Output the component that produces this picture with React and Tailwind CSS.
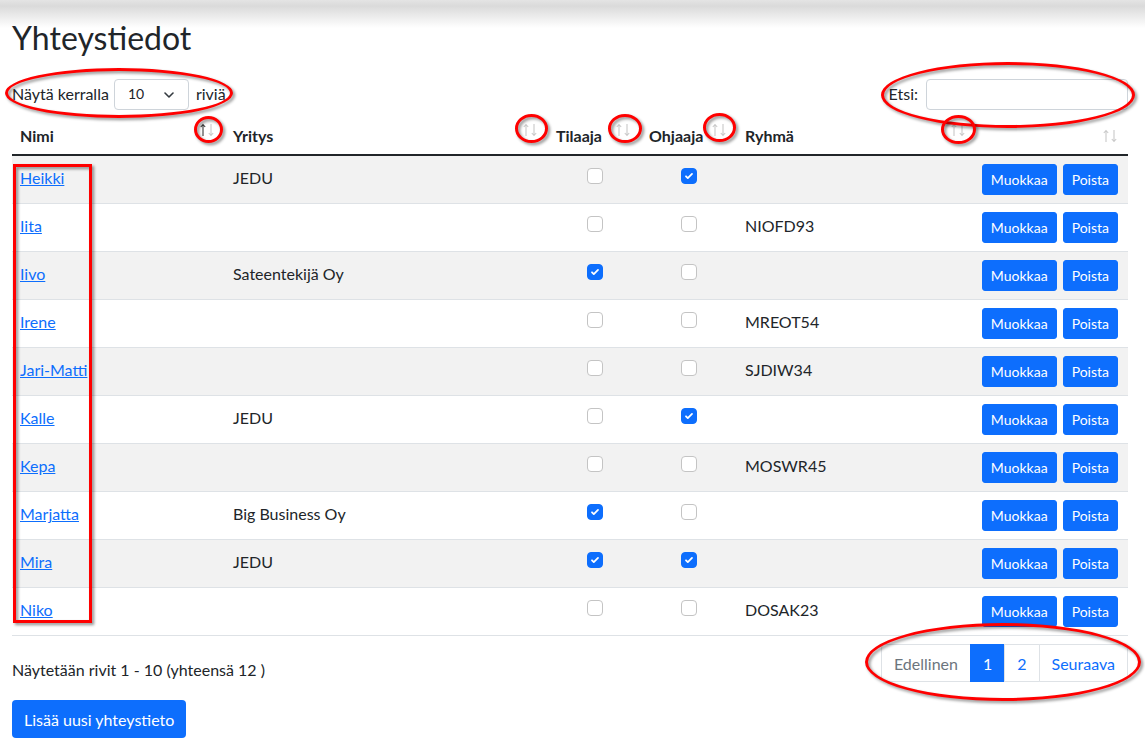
import { useState } from 'react'

const ROWS = [
  { name: 'Heikki', company: 'JEDU', tilaaja: false, ohjaaja: true, group: '' },
  { name: 'Iita', company: '', tilaaja: false, ohjaaja: false, group: 'NIOFD93' },
  { name: 'Iivo', company: 'Sateentekijä Oy', tilaaja: true, ohjaaja: false, group: '' },
  { name: 'Irene', company: '', tilaaja: false, ohjaaja: false, group: 'MREOT54' },
  { name: 'Jari-Matti', company: '', tilaaja: false, ohjaaja: false, group: 'SJDIW34' },
  { name: 'Kalle', company: 'JEDU', tilaaja: false, ohjaaja: true, group: '' },
  { name: 'Kepa', company: '', tilaaja: false, ohjaaja: false, group: 'MOSWR45' },
  { name: 'Marjatta', company: 'Big Business Oy', tilaaja: true, ohjaaja: false, group: '' },
  { name: 'Mira', company: 'JEDU', tilaaja: true, ohjaaja: true, group: '' },
  { name: 'Niko', company: '', tilaaja: false, ohjaaja: false, group: 'DOSAK23' },
]

function SortIcon({ active }) {
  return (
    <svg width="16" height="14" viewBox="0 0 16 14" className="shrink-0 mt-[-1px]" fill="none" strokeWidth="1.1">
      <g stroke={active ? '#3a3a3a' : '#c9c9c9'}>
        <path d="M4 13V1.5M1.8 4L4 1.5 6.2 4" />
      </g>
      <g stroke="#c9c9c9">
        <path d="M12 1v11.5M9.8 10L12 12.5 14.2 10" />
      </g>
    </svg>
  )
}

function Checkbox({ checked }) {
  return checked ? (
    <span className="inline-flex w-4 h-4 mt-[4px] rounded-[4px] bg-[#0d6efd] border border-[#0d6efd] items-center justify-center">
      <svg width="12" height="12" viewBox="0 0 20 20" fill="none">
        <path d="M5 10.5l3 3 7-7" stroke="#fff" strokeWidth="3" strokeLinecap="round" strokeLinejoin="round" />
      </svg>
    </span>
  ) : (
    <span className="inline-block w-4 h-4 mt-[4px] rounded-[4px] bg-white border border-[#c4c4c4]" />
  )
}

function Th({ children, active }) {
  return (
    <th className="px-2 pt-[10px] pb-[6px] text-left font-bold border-b-2 border-[#212529]">
      <div className="flex items-start justify-between pr-[2px]">
        <span className="leading-6">{children}</span>
        <SortIcon active={active} />
      </div>
    </th>
  )
}

const ring = 'absolute border-[3px] border-[#ff0000] rounded-[50%] drop-shadow-[2px_2px_1.5px_rgba(0,0,0,0.45)] pointer-events-none'
const cell = 'px-2 pt-[10px] pb-[6px] align-top leading-6'

export default function App() {
  const [perPage, setPerPage] = useState('10')
  const [query, setQuery] = useState('')

  return (
    <div
      className="relative min-h-screen bg-white bg-no-repeat bg-[linear-gradient(to_bottom,#e4e4e4_0px,#dadada_6px,#ffffff_28px)] text-[#212529] pl-3 pr-[17px] pt-[19px] pb-4"
      style={{ fontFamily: 'Lato, "Noto Sans", sans-serif' }}
    >
      <h2 className="text-[32px] leading-[38px] font-normal">Yhteystiedot</h2>

      {/* Length + search */}
      <div className="flex items-center justify-between mt-[21px] h-[31px]">
        <label className="flex items-center text-base pt-[1px]">
          Näytä kerralla
          <span className="relative ml-[5px] mr-[7px]">
            <select
              value={perPage}
              onChange={(e) => setPerPage(e.target.value)}
              className="appearance-none w-[75px] h-[31px] pl-[13px] pr-6 text-sm border border-[#ced4da] rounded-[4px] bg-white outline-none"
            >
              <option>10</option>
              <option>25</option>
              <option>50</option>
              <option>100</option>
            </select>
            <svg width="10" height="6" viewBox="0 0 10 6" className="absolute right-[15px] top-[13px] pointer-events-none" fill="none">
              <path d="M1 1l4 4 4-4" stroke="#343a40" strokeWidth="1.6" strokeLinecap="round" strokeLinejoin="round" />
            </svg>
          </span>
          riviä
        </label>
        <label className="flex items-center text-base pt-[1px]">
          Etsi:
          <input
            value={query}
            onChange={(e) => setQuery(e.target.value)}
            className="ml-2 w-[202px] h-[31px] px-2 text-sm border border-[#ced4da] rounded-[4px] outline-none"
          />
        </label>
      </div>

      {/* Table */}
      <table className="w-full table-fixed border-collapse mt-[5px] text-base">
        <colgroup>
          <col className="w-[213px]" />
          <col className="w-[323px]" />
          <col className="w-[93px]" />
          <col className="w-[96px]" />
          <col className="w-[239px]" />
          <col className="w-[152px]" />
        </colgroup>
        <thead>
          <tr>
            <Th active>Nimi</Th>
            <Th>Yritys</Th>
            <Th>Tilaaja</Th>
            <Th>Ohjaaja</Th>
            <Th>Ryhmä</Th>
            <Th />
          </tr>
        </thead>
        <tbody>
          {ROWS.map((r, i) => (
            <tr key={r.name} className={`border-b border-[#dee2e6] ${i % 2 === 0 ? 'bg-[#f2f2f2]' : 'bg-white'}`}>
              <td className={cell}>
                <a href="#" className="text-[#0d6efd] underline">{r.name}</a>
              </td>
              <td className={cell}>{r.company}</td>
              <td className="px-2 py-2 align-top text-center leading-6">
                <Checkbox checked={r.tilaaja} />
              </td>
              <td className="px-2 py-2 align-top text-center leading-6">
                <Checkbox checked={r.ohjaaja} />
              </td>
              <td className={cell}>{r.group}</td>
              <td className="pl-2 pr-[10px] py-2 align-top">
                <div className="flex justify-end gap-[6px]">
                  <button className="h-[31px] px-2 pt-[1px] text-sm text-white bg-[#0d6efd] border border-[#0d6efd] rounded-[3px]">
                    Muokkaa
                  </button>
                  <button className="h-[31px] px-2 pt-[1px] text-sm text-white bg-[#0d6efd] border border-[#0d6efd] rounded-[3px]">
                    Poista
                  </button>
                </div>
              </td>
            </tr>
          ))}
        </tbody>
      </table>

      {/* Info + pagination */}
      <div className="flex items-start justify-between mt-2">
        <div className="pt-[14px] leading-6">Näytetään rivit 1 - 10 (yhteensä 12 )</div>
        <ul className="flex leading-6">
          <li className="px-3 pt-[7px] pb-[5px] border border-[#dee2e6] rounded-l-[4px] text-[#6c757d] bg-white">Edellinen</li>
          <li className="px-3 pt-[7px] pb-[5px] border border-[#0d6efd] -ml-px bg-[#0d6efd] text-white">1</li>
          <li className="px-3 pt-[7px] pb-[5px] border border-[#dee2e6] -ml-px text-[#0d6efd] bg-white">2</li>
          <li className="px-3 pt-[7px] pb-[5px] border border-[#dee2e6] -ml-px rounded-r-[4px] text-[#0d6efd] bg-white">Seuraava</li>
        </ul>
      </div>

      <button className="mt-[18px] h-[38px] px-3 pt-[1px] text-base text-white bg-[#0d6efd] rounded-[4px]">
        Lisää uusi yhteystieto
      </button>

      {/* Red annotations */}
      <div className={`${ring} left-[5px] top-[68px] w-[228px] h-[50px]`} />
      <div className={`${ring} left-[881px] top-[62px] w-[254px] h-[66px]`} />
      <div className={`${ring} left-[194px] top-[116px] w-[29px] h-[27px]`} />
      <div className={`${ring} left-[515px] top-[114px] w-[33px] h-[29px]`} />
      <div className={`${ring} left-[608px] top-[114px] w-[34px] h-[29px]`} />
      <div className={`${ring} left-[703px] top-[113px] w-[33px] h-[29px]`} />
      <div className={`${ring} left-[941px] top-[115px] w-[35px] h-[29px]`} />
      <div className={`${ring} left-[865px] top-[623px] w-[276px] h-[78px]`} />
      <div className="absolute left-[13px] top-[164px] w-[79px] h-[459px] border-[3px] border-[#ff0000] drop-shadow-[2px_2px_1.5px_rgba(0,0,0,0.45)] pointer-events-none" />
    </div>
  )
}
